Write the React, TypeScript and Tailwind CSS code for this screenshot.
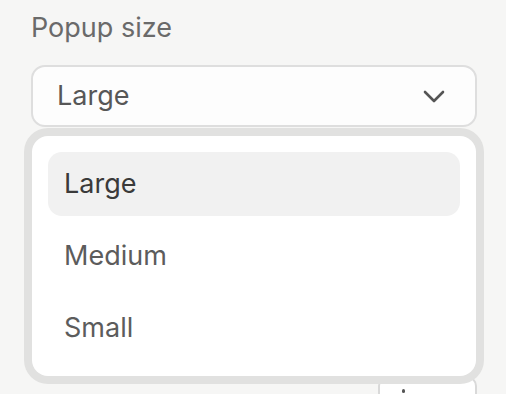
import React from "react";

export default function App() {
  const items = ["Large", "Medium", "Small"];
  return (
    <div
      className="relative w-[506px] h-[394px] overflow-hidden bg-[#f6f6f5]"
      style={{ fontFamily: "Inter, 'Noto Sans', sans-serif" }}
    >
      <div className="pl-[31px] pt-[12px] pr-[29px]">
        <div className="text-[27px] leading-[32px] text-[#6a6a6a]">Popup size</div>
        <div className="mt-[21px] flex h-[62px] items-center justify-between rounded-[14px] border-2 border-[#dedede] bg-[#fdfdfd] pl-[24px] pr-[30px]">
          <span className="text-[27px] leading-[32px] text-[#575757]">Large</span>
          <svg width="22" height="13" viewBox="0 0 22 13" fill="none">
            <polyline
              points="2,2 11,11 20,2"
              stroke="#555555"
              strokeWidth="2.6"
              strokeLinecap="round"
              strokeLinejoin="round"
            />
          </svg>
        </div>
        <div className="mt-[249px] flex justify-end">
          <div className="relative h-[40px] w-[99px] rounded-[10px] border-2 border-[#d9d9d9] bg-white">
            <div className="absolute left-[22px] top-[11px] h-[4px] w-[3px] rounded-full bg-[#555]" />
          </div>
        </div>
      </div>

      <div className="absolute left-[24px] top-[128px] z-10 w-[460px] rounded-[24px] bg-[#e1e1e0] p-[8px]">
        <div className="flex h-[240px] flex-col gap-[8px] rounded-[16px] bg-white p-[16px]">
          {items.map((it, i) => (
            <div
              key={it}
              className={
                i === 0
                  ? "flex h-[64px] items-center rounded-[14px] bg-[#f1f1f1] pl-[16px] text-[27px] leading-[32px] text-[#3a3a3a]"
                  : "flex h-[64px] items-center rounded-[14px] pl-[16px] text-[27px] leading-[32px] text-[#5c5c5c]"
              }
            >
              {it}
            </div>
          ))}
        </div>
      </div>
    </div>
  );
}
